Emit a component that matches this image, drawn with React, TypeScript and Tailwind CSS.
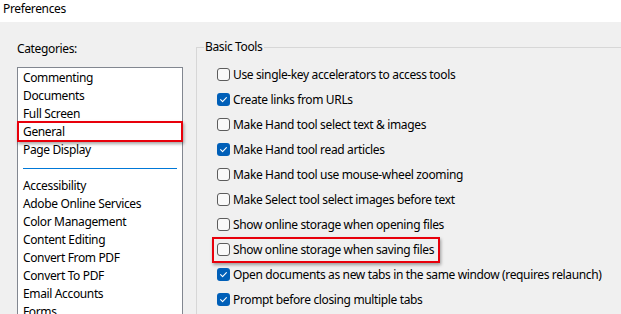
import React from "react";

const categoriesTop = ["Commenting", "Documents", "Full Screen", "General", "Page Display"];
const categoriesBottom = [
  "Accessibility",
  "Adobe Online Services",
  "Color Management",
  "Content Editing",
  "Convert From PDF",
  "Convert To PDF",
  "Email Accounts",
  "Forms",
];

const options = [
  { label: "Use single-key accelerators to access tools", checked: false },
  { label: "Create links from URLs", checked: true },
  { label: "Make Hand tool select text & images", checked: false },
  { label: "Make Hand tool read articles", checked: true },
  { label: "Make Hand tool use mouse-wheel zooming", checked: false },
  { label: "Make Select tool select images before text", checked: false },
  { label: "Show online storage when opening files", checked: false },
  { label: "Show online storage when saving files", checked: false, marked: true },
  { label: "Open documents as new tabs in the same window (requires relaunch)", checked: true },
  { label: "Prompt before closing multiple tabs", checked: true },
];

function Checkbox({ checked }: { checked: boolean }) {
  if (checked) {
    return (
      <span className="w-[13px] h-[13px] rounded-[3px] bg-[#005fb8] flex items-center justify-center shrink-0">
        <svg width="13" height="13" viewBox="0 0 13 13">
          <path d="M3.6 6.7 L5.6 8.7 L9.4 4.6" fill="none" stroke="white" strokeWidth="1.1" strokeLinecap="round" strokeLinejoin="round" />
        </svg>
      </span>
    );
  }
  return <span className="w-[13px] h-[13px] rounded-[3px] border border-[#5c5c5c] bg-[#f9f9f9] shrink-0" />;
}

export default function App() {
  return (
    <div
      className="w-[621px] h-[314px] overflow-hidden flex flex-col bg-[#f0f0f0] text-[12px] tracking-[-0.36px] text-black"
      style={{ fontFamily: '"Noto Sans", "Liberation Sans", sans-serif' }}
    >
      {/* Title bar */}
      <div className="h-[22px] bg-white pl-[3px] pt-[1px] leading-[16px] shrink-0">Preferences</div>

      <div className="flex flex-1 min-h-0">
        {/* Categories */}
        <div className="pl-[17px] w-[183px] shrink-0 pt-[19px]">
          <div className="leading-[16px] mb-[10px]">Categories:</div>
          <div className="border border-[#828790] bg-white h-[300px] pt-[1px]">
            {categoriesTop.map((c) => (
              <div key={c} className="relative h-[18px] leading-[18px] pl-[5px]">
                {c}
                {c === "General" && (
                  <span className="absolute -left-[1px] -right-[1px] -top-[2px] -bottom-[1px] border-2 border-[#e8000b] shadow-[1px_2px_3px_rgba(0,0,0,0.35)]" />
                )}
              </div>
            ))}
            <div className="h-[18px] flex items-center px-[5px]">
              <div className="h-px w-full bg-[#0078d7]" />
            </div>
            {categoriesBottom.map((c) => (
              <div key={c} className="h-[18px] leading-[18px] pl-[5px]">
                {c}
              </div>
            ))}
          </div>
        </div>

        {/* Basic Tools group */}
        <div className="flex-1 pl-[13px] pt-[25px]">
          <div className="relative h-full border-l border-t border-[#d7d7d7] pt-[14px] pl-[20px]">
            <span className="absolute -top-[9px] left-[7px] px-[1px] bg-[#f0f0f0] leading-[16px]">Basic Tools</span>
            {options.map((o) => (
              <div key={o.label} className="relative h-[25px] flex items-center gap-[3px] whitespace-nowrap">
                <Checkbox checked={o.checked} />
                <span className="leading-[16px]">{o.label}</span>
                {o.marked && (
                  <span className="absolute -left-[5px] top-0 w-[228px] h-[26px] border-2 border-[#e8000b] shadow-[1px_2px_3px_rgba(0,0,0,0.35)]" />
                )}
              </div>
            ))}
          </div>
        </div>
      </div>
    </div>
  );
}
